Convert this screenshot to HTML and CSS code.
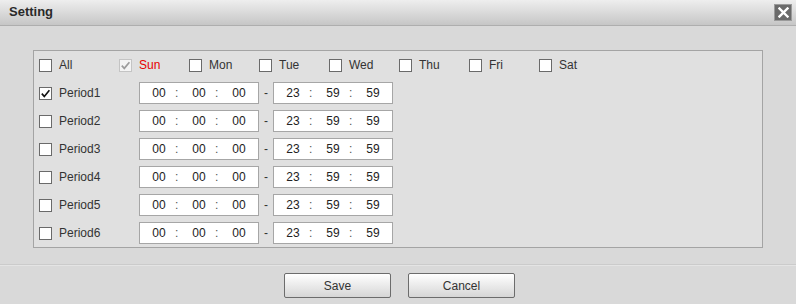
FILE: index.html
```html
<!DOCTYPE html>
<html>
<head>
<meta charset="utf-8">
<link rel="stylesheet" href="styles.css">
</head>
<body>
<div class="dialog">
  <div class="header">
    <span class="title">Setting</span>
    <span class="close"><svg width="11" height="11" viewBox="0 0 11 11"><path d="M1.5 1.5 L9.5 9.5 M9.5 1.5 L1.5 9.5" stroke="#fff" stroke-width="2.4" stroke-linecap="square"/></svg></span>
  </div>
  <div class="content">
    <div class="panel">
      <div class="row days">
        <label class="day first"><span class="cb"></span><span class="lbl">All</span></label>
        <label class="day"><span class="cb disabled checked"><svg width="11" height="11" viewBox="0 0 11 11"><path d="M1.8 5.6 L4.3 8.4 L9.4 2.2" fill="none" stroke="#9c9c9c" stroke-width="1.7"/></svg></span><span class="lbl red">Sun</span></label>
        <label class="day"><span class="cb"></span><span class="lbl">Mon</span></label>
        <label class="day"><span class="cb"></span><span class="lbl">Tue</span></label>
        <label class="day"><span class="cb"></span><span class="lbl">Wed</span></label>
        <label class="day"><span class="cb"></span><span class="lbl">Thu</span></label>
        <label class="day"><span class="cb"></span><span class="lbl">Fri</span></label>
        <label class="day"><span class="cb"></span><span class="lbl">Sat</span></label>
      </div>
      <div class="row">
        <label class="period"><span class="cb checked"><svg width="11" height="11" viewBox="0 0 11 11"><path d="M1.8 5.6 L4.3 8.4 L9.4 2.2" fill="none" stroke="#111" stroke-width="1.6"/></svg></span><span class="lbl">Period1</span></label>
        <div class="time"><span class="f">00</span><span class="c">:</span><span class="f">00</span><span class="c">:</span><span class="f">00</span></div>
        <span class="dash">-</span>
        <div class="time"><span class="f">23</span><span class="c">:</span><span class="f">59</span><span class="c">:</span><span class="f">59</span></div>
      </div>
      <div class="row">
        <label class="period"><span class="cb"></span><span class="lbl">Period2</span></label>
        <div class="time"><span class="f">00</span><span class="c">:</span><span class="f">00</span><span class="c">:</span><span class="f">00</span></div>
        <span class="dash">-</span>
        <div class="time"><span class="f">23</span><span class="c">:</span><span class="f">59</span><span class="c">:</span><span class="f">59</span></div>
      </div>
      <div class="row">
        <label class="period"><span class="cb"></span><span class="lbl">Period3</span></label>
        <div class="time"><span class="f">00</span><span class="c">:</span><span class="f">00</span><span class="c">:</span><span class="f">00</span></div>
        <span class="dash">-</span>
        <div class="time"><span class="f">23</span><span class="c">:</span><span class="f">59</span><span class="c">:</span><span class="f">59</span></div>
      </div>
      <div class="row">
        <label class="period"><span class="cb"></span><span class="lbl">Period4</span></label>
        <div class="time"><span class="f">00</span><span class="c">:</span><span class="f">00</span><span class="c">:</span><span class="f">00</span></div>
        <span class="dash">-</span>
        <div class="time"><span class="f">23</span><span class="c">:</span><span class="f">59</span><span class="c">:</span><span class="f">59</span></div>
      </div>
      <div class="row">
        <label class="period"><span class="cb"></span><span class="lbl">Period5</span></label>
        <div class="time"><span class="f">00</span><span class="c">:</span><span class="f">00</span><span class="c">:</span><span class="f">00</span></div>
        <span class="dash">-</span>
        <div class="time"><span class="f">23</span><span class="c">:</span><span class="f">59</span><span class="c">:</span><span class="f">59</span></div>
      </div>
      <div class="row">
        <label class="period"><span class="cb"></span><span class="lbl">Period6</span></label>
        <div class="time"><span class="f">00</span><span class="c">:</span><span class="f">00</span><span class="c">:</span><span class="f">00</span></div>
        <span class="dash">-</span>
        <div class="time"><span class="f">23</span><span class="c">:</span><span class="f">59</span><span class="c">:</span><span class="f">59</span></div>
      </div>
    </div>
  </div>
  <div class="footer">
    <button class="btn">Save</button>
    <button class="btn">Cancel</button>
  </div>
</div>
</body>
</html>
```
FILE: styles.css
```css
* { box-sizing: border-box; }
html, body { margin: 0; padding: 0; }
body {
  width: 796px;
  height: 304px;
  overflow: hidden;
  font-family: "Liberation Sans", Arial, sans-serif;
  font-size: 12px;
  color: #333;
  background: #d9d9d9;
}
.dialog { width: 796px; height: 304px; display: flex; flex-direction: column; }
.header {
  height: 26px;
  display: flex;
  align-items: center;
  justify-content: space-between;
  padding: 0 4px 0 9px;
  background: linear-gradient(#eeeeee, #c6c6c6);
  border-bottom: 1px solid #aeaeae;
}
.title { font-size: 13px; font-weight: bold; color: #2a2a2a; margin-top: -2px; }
.close {
  width: 18px; height: 17px;
  background: #6a6a6a;
  border: 1px solid #9a9a9a;
  display: flex; align-items: center; justify-content: center;
  margin-top: -1px;
}
.content { padding: 24px 33px 0 33px; height: 238px; }
.panel {
  border: 1px solid #a4a4a4;
  background: #e0e0e0;
  height: 198px;
}
.row { height: 28px; display: flex; align-items: center; padding-left: 5px; }
.day, .period { display: flex; align-items: center; }
.day { width: 70px; }
.day.first { width: 80px; }
.period { width: 100px; }
.cb {
  width: 13px; height: 13px;
  border: 1px solid #6a6a6a;
  background: #fff;
  display: flex; align-items: center; justify-content: center;
  flex: none;
}
.cb.disabled { border-color: #c4c4c4; background: #f4f4f4; }
.lbl { margin-left: 7px; }
.red { color: #e60000; }
.time {
  width: 120px; height: 22px;
  border: 1px solid #a6a6a6;
  background: #fff;
  display: flex; align-items: center;
  padding-left: 6px;
  font-size: 12px;
  color: #222;
}
.f { width: 26px; text-align: center; }
.c { width: 14px; padding-left: 3px; color: #555; }
.dash { width: 14px; text-align: center; color: #333; }
.footer {
  flex: 1;
  border-top: 1px solid #cbcbcb;
  box-shadow: inset 0 1px 0 #e4e4e4;
  display: flex;
  justify-content: center;
  gap: 17px;
  padding-top: 8px;
  padding-left: 3px;
}
.btn {
  width: 107px; height: 25px;
  border: 1px solid #6c6c6c;
  border-radius: 2px;
  background: linear-gradient(#ffffff, #d6d6d6);
  font-family: "Liberation Sans", Arial, sans-serif;
  font-size: 12px;
  color: #333;
  padding: 0;
}
```
